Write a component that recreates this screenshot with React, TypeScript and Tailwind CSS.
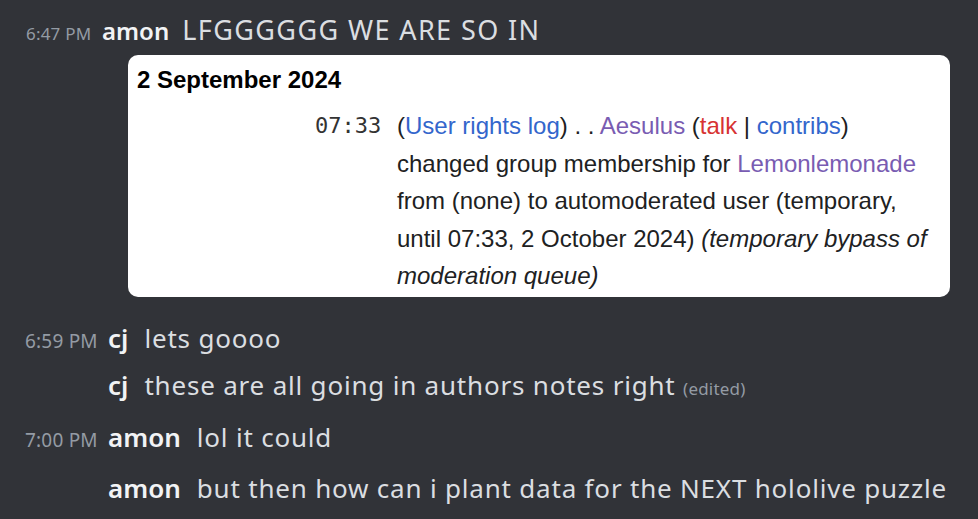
import React from 'react';

const chat = "font-['Noto_Sans',sans-serif]";
const wiki = "font-['Liberation_Sans',Arial,sans-serif]";

function Row({ time, name, children, className = '' }: { time?: string; name: string; children: React.ReactNode; className?: string }) {
  return (
    <div className={`flex items-baseline ${className}`}>
      <div className="w-[108px] shrink-0 pl-[25px] text-[19px] tracking-[0.2px] text-[#949ba4]">{time}</div>
      <span className="text-[26px] font-semibold text-[#f2f3f5]">{name}</span>
      <span className="ml-[16px] text-[26px] tracking-[0.8px] text-[#dbdee1]">{children}</span>
    </div>
  );
}

export default function App() {
  return (
    <div className={`w-[978px] h-[519px] overflow-hidden bg-[#313338] ${chat}`}>
      {/* first message + embed */}
      <div className="pt-[10px]">
        <div className="flex h-[37px] items-baseline">
          <div className="w-[102px] shrink-0 pl-[26px] text-[17px] tracking-[0.2px] text-[#949ba4]">6:47 PM</div>
          <span className="text-[24px] font-semibold text-[#f2f3f5]">amon</span>
          <span className="ml-[13px] text-[27px] tracking-[1.4px] text-[#dbdee1]">LFGGGGGG WE ARE SO IN</span>
        </div>
        <div className={`ml-[128px] mt-[8px] w-[822px] h-[242px] rounded-[10px] bg-white pl-[9px] pt-[10px] text-[#202122] ${wiki}`}>
          <div className="text-[24px] font-bold leading-[30px] text-black">2 September 2024</div>
          <div className="mt-[12px] flex">
            <div className="w-[260px] shrink-0 pl-[178px] text-[22px] leading-[37.5px] text-[#333] font-['DejaVu_Sans_Mono',monospace]">07:33</div>
            <div className="text-[24px] leading-[37.5px]">
              (<span className="text-[#3366cc]">User rights log</span>) . . <span className="text-[#795cb2]">Aesulus</span> (<span className="text-[#d73333]">talk</span> | <span className="text-[#3366cc]">contribs</span>)
              <br />
              changed group membership for <span className="text-[#795cb2]">Lemonlemonade</span>
              <br />
              from (none) to automoderated user (temporary,
              <br />
              until 07:33, 2 October 2024) <i>(temporary bypass of</i>
              <br />
              <i>moderation queue)</i>
            </div>
          </div>
        </div>
      </div>

      <div className="mt-[22px] flex flex-col">
        <Row time="6:59 PM" name="cj" className="h-[47px]">lets goooo</Row>
        <Row name="cj" className="h-[52px]">
          these are all going in authors notes right <span className="text-[17px] tracking-[0.2px] text-[#949ba4]">(edited)</span>
        </Row>
        <Row time="7:00 PM" name="amon" className="h-[51px]">lol it could</Row>
        <Row name="amon" className="h-[50px]">but then how can i plant data for the NEXT hololive puzzle</Row>
      </div>
    </div>
  );
}
